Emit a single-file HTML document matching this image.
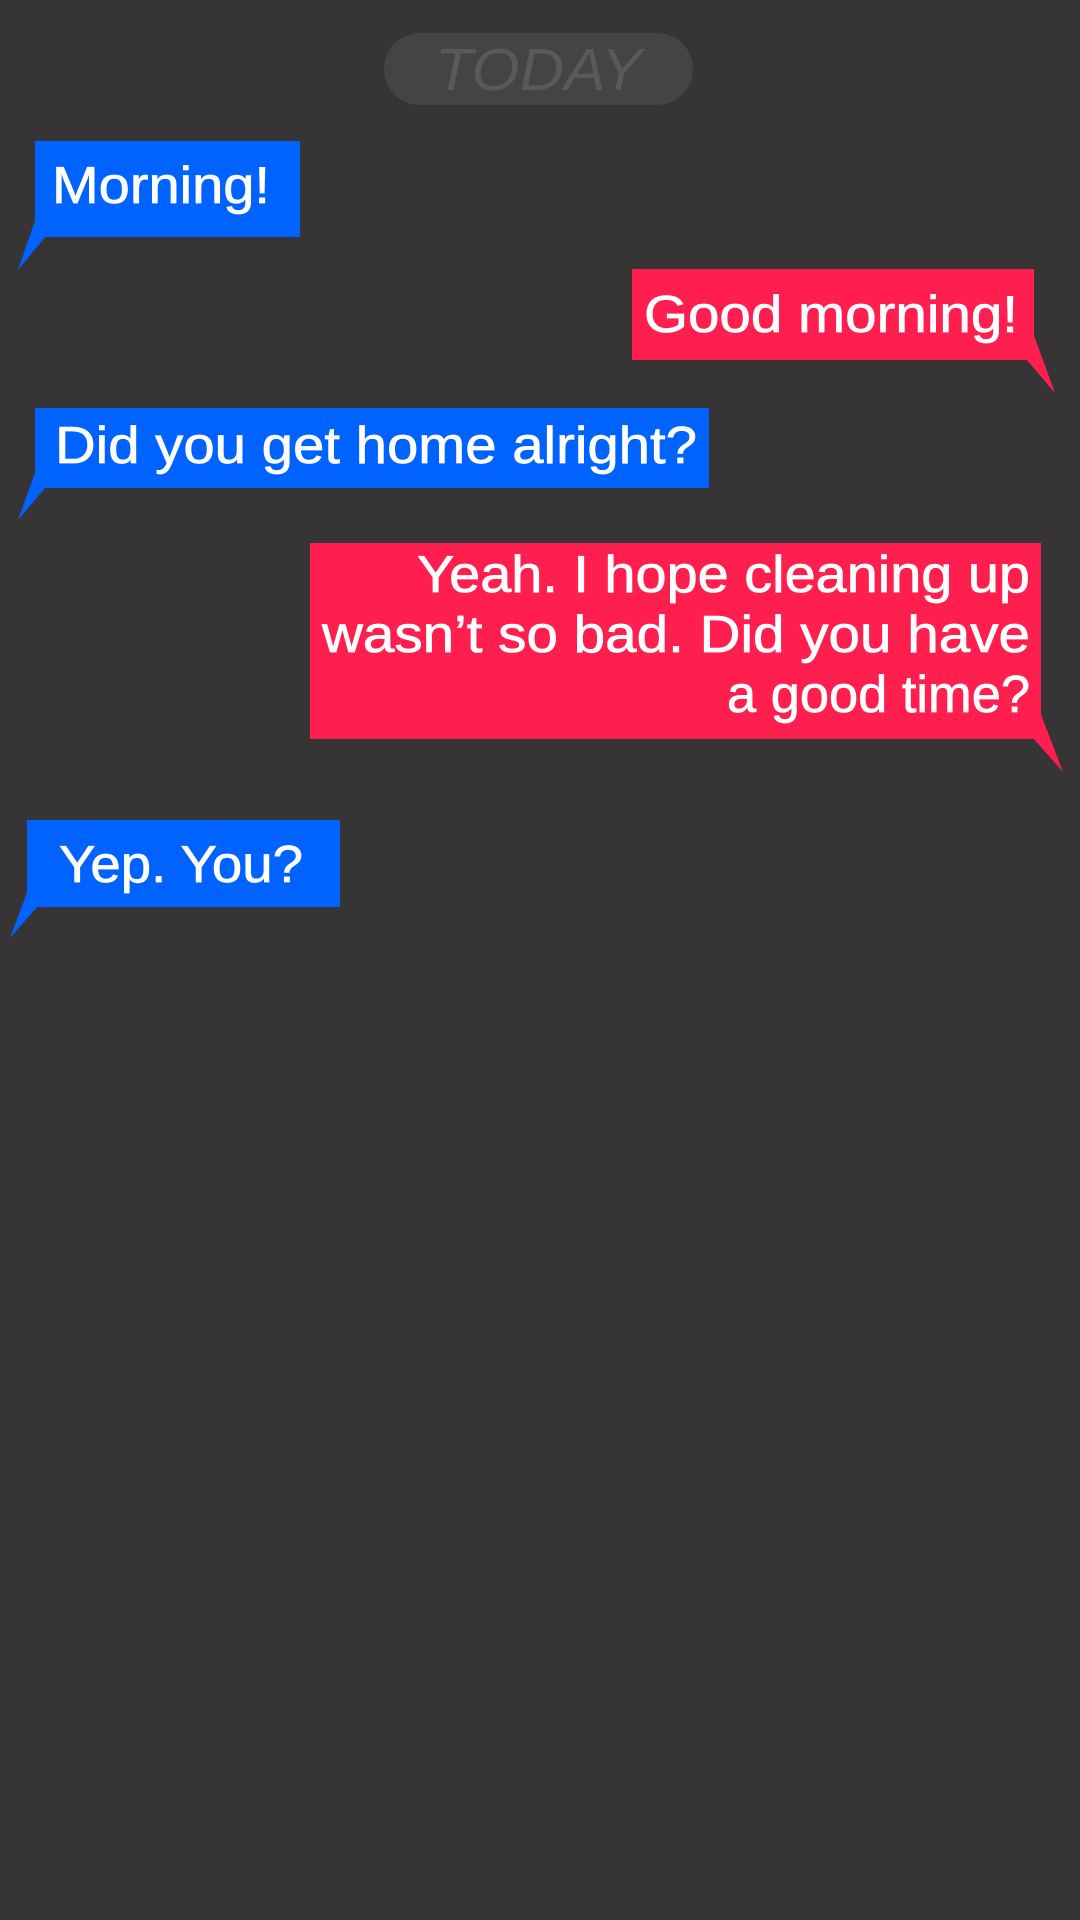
<!DOCTYPE html>
<html><head><meta charset="utf-8"><style>
html,body{margin:0;padding:0;background:#363435;}
svg{display:block}
text{font-family:"Liberation Sans",Arial,sans-serif;}
</style></head><body>
<svg width="1080" height="1920" viewBox="0 0 1080 1920" xmlns="http://www.w3.org/2000/svg">
<rect width="1080" height="1920" fill="#363435"/>
<rect x="384" y="33" width="309" height="72" rx="36" fill="#464442"/>
<text x="435" y="90" font-size="59" font-style="italic" fill="#5a5957" textLength="207" lengthAdjust="spacingAndGlyphs">TODAY</text>

<g fill="#0062ff">
<rect x="35" y="141" width="265" height="96"/>
<polygon points="36,218 18,270 46,236"/>
<rect x="35" y="408" width="674" height="80"/>
<polygon points="36,470 18,520 46,487"/>
<rect x="27" y="820" width="313" height="87"/>
<polygon points="28,890 10,938 38,906"/>
</g>
<g fill="#ff1f4f">
<rect x="632" y="269" width="402" height="91"/>
<polygon points="1033,333 1055,393 1026,359"/>
<rect x="310" y="543" width="731" height="196"/>
<polygon points="1040,712 1063,772 1033,738"/>
</g>
<g fill="#fff" stroke="#fff" stroke-width="0.7" font-size="52">
<text x="52" y="203" textLength="218" lengthAdjust="spacingAndGlyphs">Morning!</text>
<text x="644" y="332" textLength="374" lengthAdjust="spacingAndGlyphs">Good morning!</text>
<text x="55" y="463" textLength="642" lengthAdjust="spacingAndGlyphs">Did you get home alright?</text>
<text x="417" y="592" textLength="613" lengthAdjust="spacingAndGlyphs">Yeah. I hope cleaning up</text>
<text x="322" y="652" textLength="708" lengthAdjust="spacingAndGlyphs">wasn’t so bad. Did you have</text>
<text x="727" y="712" textLength="303" lengthAdjust="spacingAndGlyphs">a good time?</text>
<text x="59" y="882" textLength="244" lengthAdjust="spacingAndGlyphs">Yep. You?</text>
</g>
</svg>
</body></html>
